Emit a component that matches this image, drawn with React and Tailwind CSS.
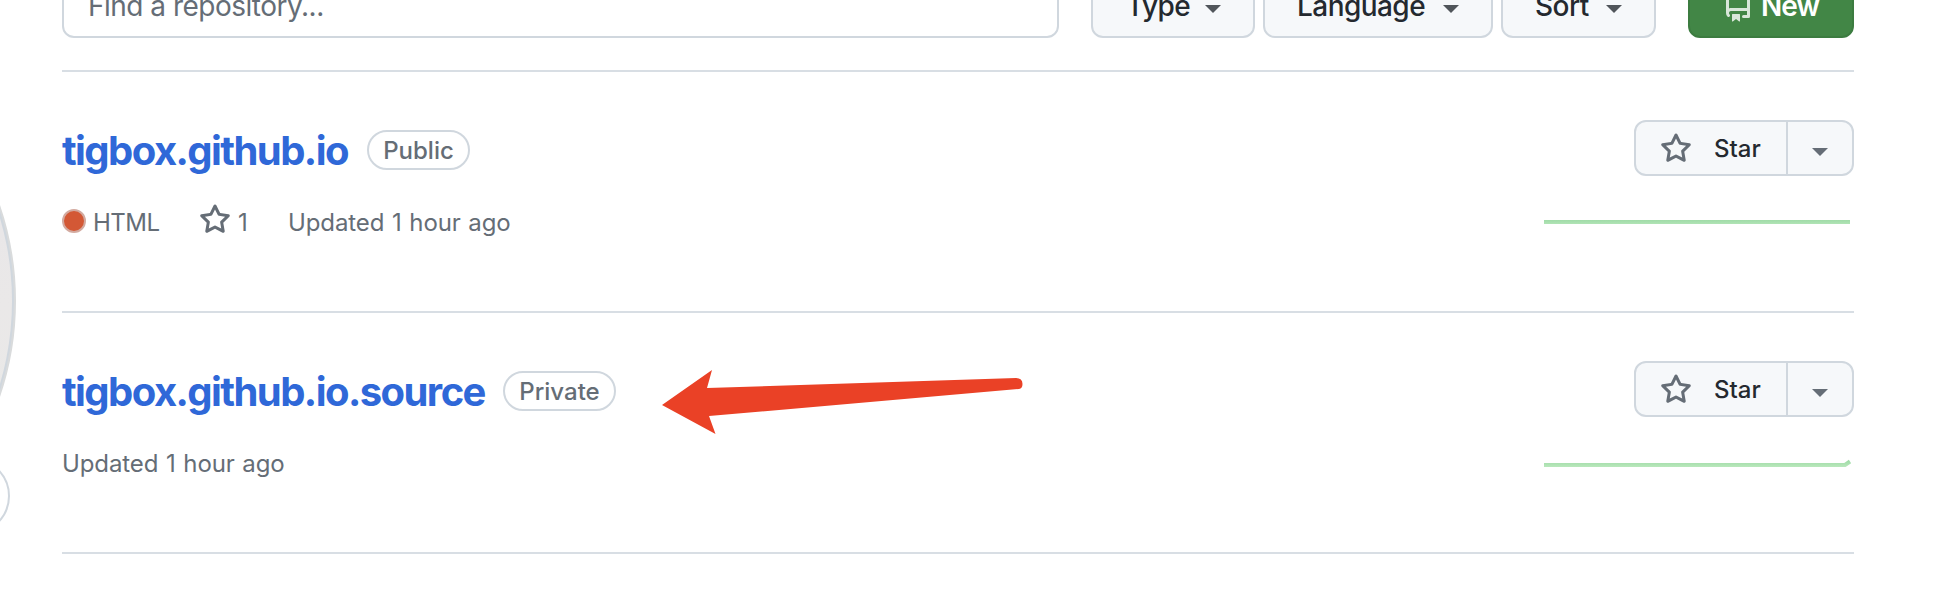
const STAR =
  "M8 .25a.75.75 0 01.673.418l1.882 3.815 4.21.612a.75.75 0 01.416 1.279l-3.046 2.97.719 4.192a.75.75 0 01-1.088.791L8 12.347l-3.766 1.98a.75.75 0 01-1.088-.79l.72-4.194L.818 6.374a.75.75 0 01.416-1.28l4.21-.611L7.327.668A.75.75 0 018 .25zm0 2.445L6.615 5.5a.75.75 0 01-.564.41l-3.097.45 2.24 2.184a.75.75 0 01.216.664l-.528 3.084 2.769-1.456a.75.75 0 01.698 0l2.77 1.456-.53-3.084a.75.75 0 01.216-.664l2.24-2.183-3.096-.45a.75.75 0 01-.564-.41L8 2.694v.001z";
const REPO =
  "M2 2.5A2.5 2.5 0 014.5 0h8.75a.75.75 0 01.75.75v12.5a.75.75 0 01-.75.75h-2.5a.75.75 0 110-1.5h1.75v-2h-8a1 1 0 00-.714 1.7.75.75 0 01-1.072 1.05A2.495 2.495 0 012 11.5v-9zm10.5-1V9h-8c-.356 0-.694.074-1 .208V2.5a1 1 0 011-1h8zM5 12.25v3.25a.25.25 0 00.4.2l1.45-1.087a.25.25 0 01.3 0L8.6 15.7a.25.25 0 00.4-.2v-3.25a.25.25 0 00-.25-.25h-3.5a.25.25 0 00-.25.25z";

function Icon({ d, className }) {
  return (
    <svg viewBox="0 0 16 16" className={`size-8 shrink-0 ${className}`} fill="currentColor" fillRule="evenodd">
      <path d={d} />
    </svg>
  );
}

function Caret({ className }) {
  return (
    <svg viewBox="0 0 16 8" className={`h-2 w-4 shrink-0 ${className}`} fill="currentColor">
      <path d="M0 0h16L8 8z" />
    </svg>
  );
}

function FilterButton({ label, className }) {
  return (
    <button
      className={`flex h-16 items-center justify-between rounded-xl border-2 border-[#d0d7de] bg-[#f6f8fa] pr-8 text-[28px] font-medium tracking-[-0.55px] text-[#24292f] ${className}`}
    >
      <span>{label}</span>
      <Caret className="mt-1.5 text-[#50555a]" />
    </button>
  );
}

function Toolbar() {
  return (
    <div className="-mt-[26px] flex h-[98px] shrink-0 items-start border-b-2 border-[#d8dee4]">
      <input
        className="h-16 w-[997px] rounded-xl border-2 border-[#d0d7de] bg-white pl-6 text-[28px] tracking-[-0.5px] placeholder:text-[#656d76] placeholder:opacity-100"
        placeholder="Find a repository..."
      />
      <div className="ml-8 flex gap-2">
        <FilterButton label="Type" className="w-[164px] pl-[33px]" />
        <FilterButton label="Language" className="w-[230px] pl-8" />
        <FilterButton label="Sort" className="w-[155px] pl-8" />
      </div>
      <button className="ml-8 flex h-16 w-[166px] items-center rounded-xl border-2 border-[#3c7c40] bg-[#428646] pl-8 text-[28px] font-semibold tracking-[-1px] text-white">
        <Icon d={REPO} className="text-[#d9e7da]" />
        <span className="ml-[7px]">New</span>
      </button>
    </div>
  );
}

function StarButton() {
  return (
    <div className="flex h-14 w-[220px] rounded-xl border-2 border-[#d0d7de] bg-[#f6f8fa]">
      <button className="flex w-[152px] items-center border-r-2 border-[#d0d7de] pt-0.5 pl-6 text-2xl font-medium text-[#24292f]">
        <Icon d={STAR} className="text-[#656d76]" />
        <span className="ml-[22px]">Star</span>
      </button>
      <button className="flex flex-1 items-center justify-center pt-2">
        <Caret className="text-[#656d76]" />
      </button>
    </div>
  );
}

function Sparkline({ id, d }) {
  return (
    <svg viewBox="0 0 310 20" className="h-5 w-[310px]" fill="none">
      <defs>
        <linearGradient id={id} gradientUnits="userSpaceOnUse" x1="0" y1="4" x2="0" y2="16">
          <stop offset="0" stopColor="#8fd39a" />
          <stop offset="1" stopColor="#c2ecc3" />
        </linearGradient>
      </defs>
      <path d={d} stroke={`url(#${id})`} strokeWidth="4" />
    </svg>
  );
}

function RepoRow({ name, visibility, titleClass, badgeClass, spark, children }) {
  return (
    <li className="flex h-[241px] justify-between border-b-2 border-[#d8dee4]">
      <div className="pt-12">
        <div className="flex h-[60px] items-center">
          <h3 className={`pt-0.5 text-[40px] font-bold tracking-[-1.56px] text-[#2f68d8] ${titleClass}`}>
            <a href="#">{name}</a>
          </h3>
          <span
            className={`flex h-10 items-center justify-center rounded-full border-2 border-[#d0d7de] pt-0.5 text-2xl font-medium text-[#656d76] ${badgeClass}`}
          >
            {visibility}
          </span>
        </div>
        <div className="mt-[25px] flex h-9 items-center text-2xl text-[#656d76]">{children}</div>
      </div>
      <div className="flex flex-col items-end pt-12">
        <StarButton />
        <div className="mt-9">
          <Sparkline id={`spark-${visibility}`} d={spark} />
        </div>
      </div>
    </li>
  );
}

export default function App() {
  return (
    <div className="relative flex h-[608px] w-[1956px] overflow-hidden bg-white font-['Inter',sans-serif]">
      <aside className="w-[62px] shrink-0">
        <div className="absolute top-[5px] -left-[576px] size-[592px] rounded-full border-2 border-[#d9dbdc] bg-[#d0d7de] p-0.5">
          <div className="size-full rounded-full bg-linear-to-b from-[#e6e4e9] via-[#eae8e8] to-[#e8ebe8]" />
        </div>
        <div className="absolute top-[458px] -left-[66px] size-[76px] rounded-full border-2 border-[#d0d7de] bg-white" />
      </aside>
      <main className="flex w-[1792px] flex-col">
        <Toolbar />
        <ul>
          <RepoRow
            name="tigbox.github.io"
            visibility="Public"
            titleClass="w-[305px]"
            badgeClass="w-[103px]"
            spark="M0 10H306"
          >
            <span className="mr-[7px] -mt-1 size-6 rounded-full border-2 border-[#d3aaa0] bg-[#d35835]" />
            <span className="w-[106px] tracking-[-0.5px]">HTML</span>
            <Icon d={STAR} className="-mt-1.5" />
            <span className="ml-[7px] w-[50px]">1</span>
            <span className="tracking-[-0.1px] [word-spacing:1px]">Updated 1 hour ago</span>
          </RepoRow>
          <RepoRow
            name="tigbox.github.io.source"
            visibility="Private"
            titleClass="w-[441px]"
            badgeClass="w-[113px]"
            spark="M0 12H301L306 8.500"
          >
            <span className="tracking-[-0.1px] [word-spacing:1px]">Updated 1 hour ago</span>
          </RepoRow>
        </ul>
      </main>
      <svg viewBox="0 0 400 120" className="absolute top-[340px] left-[640px] h-[120px] w-[400px]" fill="#ea4126">
        <path d="M22 65L72 30L67 48L376 38Q382.5 38 382.5 44Q382.5 48.5 379 49L69 76L75.500 94Z" />
      </svg>
    </div>
  );
}
